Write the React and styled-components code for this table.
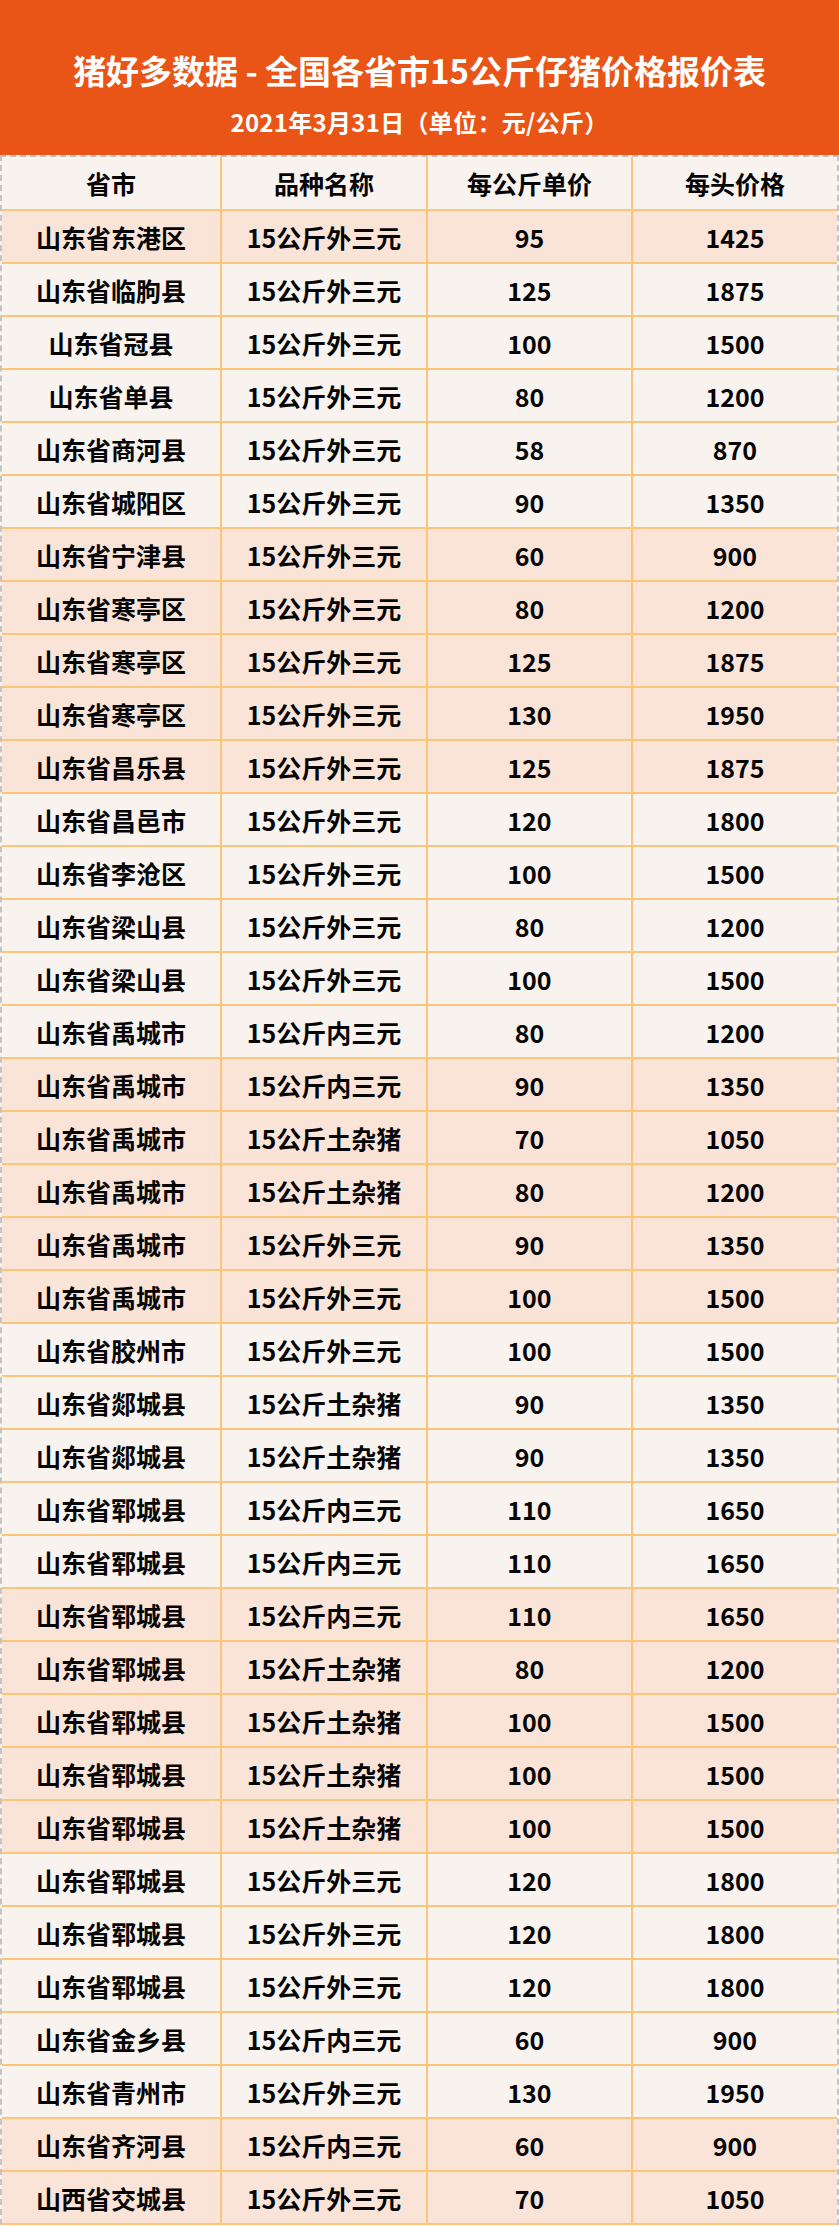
import React from "react";
import styled, { createGlobalStyle } from "styled-components";

const GlobalStyle = createGlobalStyle`
    body {
        margin: 0;
        background: #ffffff;
        font-family: "Noto Sans CJK SC", "Noto Sans", sans-serif;
    }
`;

const Page = styled.div`
    width: 839px;
    overflow: hidden;
`;

const Banner = styled.header`
    height: 155px;
    background-color: #e85516;
    color: #ffffff;
    display: flex;
    flex-direction: column;
    align-items: center;
    font-weight: 700;
    box-sizing: border-box;
    padding-top: 47px;
`;

const Title = styled.h1`
    margin: 0;
    font-size: 33px;
    line-height: 46px;
    font-weight: 700;
`;

const SubTitle = styled.div`
    margin-top: 13px;
    font-size: 24px;
    line-height: 32px;
    letter-spacing: 0.3px;
`;

const Table = styled.div`
    border-top: 2px dashed #bdbdbd;
    border-left: 2px dashed #c4c4c4;
    border-right: 2px dashed #c4c4c4;
    background-color: #f8f3ef;
`;

const Row = styled.div`
    display: grid;
    grid-template-columns: 220px 206px 205px 1fr;
    height: ${(props) => (props.$head ? "52px" : "51px")};
    border-bottom: 2px solid #fcc57a;
    background-color: ${(props) => (props.$tint ? "#fae4d8" : "#f8f3ef")};
`;

const Cell = styled.div`
    display: flex;
    align-items: center;
    justify-content: center;
    font-size: 25px;
    font-weight: 700;
    color: #050505;
    border-right: 2px solid #fcc57a;
    &:last-child {
        border-right: none;
    }
`;

const rows = [
    ["山东省东港区", "15公斤外三元", 95, 1425, 1],
    ["山东省临朐县", "15公斤外三元", 125, 1875, 0],
    ["山东省冠县", "15公斤外三元", 100, 1500, 0],
    ["山东省单县", "15公斤外三元", 80, 1200, 0],
    ["山东省商河县", "15公斤外三元", 58, 870, 0],
    ["山东省城阳区", "15公斤外三元", 90, 1350, 0],
    ["山东省宁津县", "15公斤外三元", 60, 900, 1],
    ["山东省寒亭区", "15公斤外三元", 80, 1200, 1],
    ["山东省寒亭区", "15公斤外三元", 125, 1875, 1],
    ["山东省寒亭区", "15公斤外三元", 130, 1950, 1],
    ["山东省昌乐县", "15公斤外三元", 125, 1875, 1],
    ["山东省昌邑市", "15公斤外三元", 120, 1800, 0],
    ["山东省李沧区", "15公斤外三元", 100, 1500, 0],
    ["山东省梁山县", "15公斤外三元", 80, 1200, 0],
    ["山东省梁山县", "15公斤外三元", 100, 1500, 0],
    ["山东省禹城市", "15公斤内三元", 80, 1200, 0],
    ["山东省禹城市", "15公斤内三元", 90, 1350, 1],
    ["山东省禹城市", "15公斤土杂猪", 70, 1050, 1],
    ["山东省禹城市", "15公斤土杂猪", 80, 1200, 1],
    ["山东省禹城市", "15公斤外三元", 90, 1350, 1],
    ["山东省禹城市", "15公斤外三元", 100, 1500, 1],
    ["山东省胶州市", "15公斤外三元", 100, 1500, 0],
    ["山东省郯城县", "15公斤土杂猪", 90, 1350, 0],
    ["山东省郯城县", "15公斤土杂猪", 90, 1350, 0],
    ["山东省郓城县", "15公斤内三元", 110, 1650, 0],
    ["山东省郓城县", "15公斤内三元", 110, 1650, 0],
    ["山东省郓城县", "15公斤内三元", 110, 1650, 1],
    ["山东省郓城县", "15公斤土杂猪", 80, 1200, 1],
    ["山东省郓城县", "15公斤土杂猪", 100, 1500, 1],
    ["山东省郓城县", "15公斤土杂猪", 100, 1500, 1],
    ["山东省郓城县", "15公斤土杂猪", 100, 1500, 1],
    ["山东省郓城县", "15公斤外三元", 120, 1800, 0],
    ["山东省郓城县", "15公斤外三元", 120, 1800, 0],
    ["山东省郓城县", "15公斤外三元", 120, 1800, 0],
    ["山东省金乡县", "15公斤内三元", 60, 900, 0],
    ["山东省青州市", "15公斤外三元", 130, 1950, 0],
    ["山东省齐河县", "15公斤内三元", 60, 900, 1],
    ["山西省交城县", "15公斤外三元", 70, 1050, 1],
];

export default function App() {
    return (
        <Page>
            <GlobalStyle />
            <Banner>
                <Title>猪好多数据 - 全国各省市15公斤仔猪价格报价表</Title>
                <SubTitle>2021年3月31日（单位：元/公斤）</SubTitle>
            </Banner>
            <Table>
                <Row $head>
                    <Cell>省市</Cell>
                    <Cell>品种名称</Cell>
                    <Cell>每公斤单价</Cell>
                    <Cell>每头价格</Cell>
                </Row>
                {rows.map(([place, kind, unit, total, tint], i) => (
                    <Row key={i} $tint={tint === 1}>
                        <Cell>{place}</Cell>
                        <Cell>{kind}</Cell>
                        <Cell>{unit}</Cell>
                        <Cell>{total}</Cell>
                    </Row>
                ))}
            </Table>
        </Page>
    );
}
